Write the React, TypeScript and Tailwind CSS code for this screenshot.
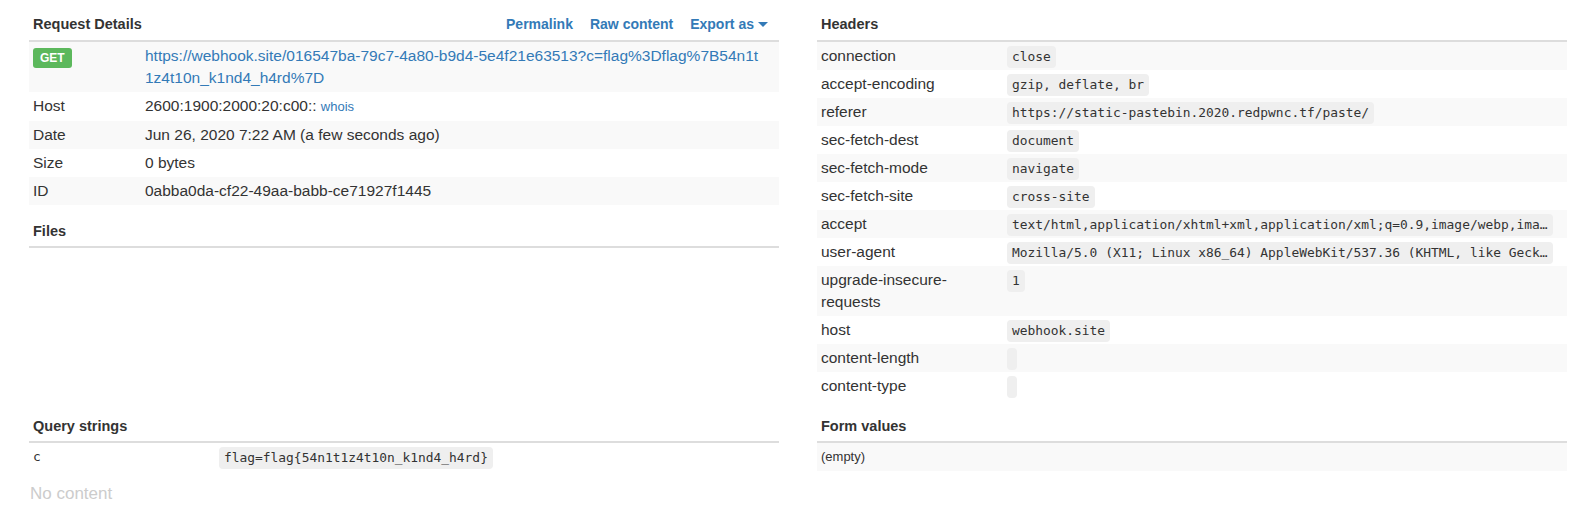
import React from 'react'

const HEADERS: [string, string][] = [
  ['connection', 'close'],
  ['accept-encoding', 'gzip, deflate, br'],
  ['referer', 'https://static-pastebin.2020.redpwnc.tf/paste/'],
  ['sec-fetch-dest', 'document'],
  ['sec-fetch-mode', 'navigate'],
  ['sec-fetch-site', 'cross-site'],
  ['accept', 'text/html,application/xhtml+xml,application/xml;q=0.9,image/webp,ima\u2026'],
  ['user-agent', 'Mozilla/5.0 (X11; Linux x86_64) AppleWebKit/537.36 (KHTML, like Geck\u2026'],
  ['upgrade-insecure-requests', '1'],
  ['host', 'webhook.site'],
  ['content-length', ''],
  ['content-type', ''],
]

function Code({ children }: { children?: React.ReactNode }) {
  return (
    <code className="block w-fit max-w-full h-[22px] whitespace-nowrap rounded-[4px] bg-[#efefef] px-[5px] py-[2px] font-['DejaVu_Sans_Mono','Liberation_Mono',monospace] text-[12.9px] leading-[18px] text-[#333]">
      {children}
    </code>
  )
}

function SectionHeader({ title, first, children }: { title: string; first?: boolean; children?: React.ReactNode }) {
  return (
    <div
      className={
        first
          ? 'flex items-end justify-between border-b-2 border-[#ddd] pl-1 pt-[14px] pb-[6px]'
          : 'flex items-end justify-between border-b-2 border-[#ddd] pl-1 mt-[16px] pb-[5px]'
      }
    >
      <h3 className="text-[14.5px] font-bold leading-[20px] text-[#333]">{title}</h3>
      {children}
    </div>
  )
}

function Row({ label, striped, children }: { label: React.ReactNode; striped: boolean; children: React.ReactNode }) {
  return (
    <div className={`flex ${striped ? 'bg-[#f9f9f9]' : 'bg-white'}`}>
      <div className="w-[112px] shrink-0 px-1 py-[3px] leading-[22px]">{label}</div>
      <div className="min-w-0 flex-1 pl-1 pr-1 py-[3px] leading-[22px]">{children}</div>
    </div>
  )
}

export default function App() {
  return (
    <div className="h-[507px] w-[1593px] overflow-hidden bg-white font-['Liberation_Sans',Arial,sans-serif] text-[15.5px] text-[#333]">
      <div className="flex gap-[38px] pl-[29px]">
        {/* request details + files */}
        <div className="w-[750px]">
          <SectionHeader title="Request Details" first>
            <div className="mr-[11px] flex items-center gap-[17px] text-[14px] font-bold leading-[20px] text-[#337ab7]">
              <a>Permalink</a>
              <a>Raw content</a>
              <a className="flex items-center">
                Export as
                <span className="ml-[4px] inline-block h-0 w-0 border-x-[5px] border-t-[5px] border-x-transparent border-t-[#337ab7]" />
              </a>
            </div>
          </SectionHeader>

          <div className="flex bg-[#f9f9f9]">
            <div className="w-[112px] shrink-0 px-1 pt-[6px]">
              <span className="block h-[20px] w-fit rounded-[3px] bg-[#5cb85c] px-[7px] text-[12px] font-bold leading-[20px] text-white">GET</span>
            </div>
            <div className="flex-1 px-1 py-[3px] leading-[22px] text-[#337ab7]">
              https://webhook.site/016547ba-79c7-4a80-b9d4-5e4f21e63513?c=flag%3Dflag%7B54n1t
              <br />
              1z4t10n_k1nd4_h4rd%7D
            </div>
          </div>
          <Row label="Host" striped={false}>
            2600:1900:2000:20:c00:: <a className="text-[13px] text-[#337ab7]">whois</a>
          </Row>
          <Row label="Date" striped>Jun 26, 2020 7:22 AM (a few seconds ago)</Row>
          <Row label="Size" striped={false}>0 bytes</Row>
          <Row label="ID" striped>0abba0da-cf22-49aa-babb-ce71927f1445</Row>

          <SectionHeader title="Files" />
        </div>

        {/* headers */}
        <div className="w-[750px]">
          <SectionHeader title="Headers" first />
          {HEADERS.map(([k, v], i) => (
            <div key={k} className={`flex ${i % 2 === 0 ? 'bg-[#f9f9f9]' : 'bg-white'}`}>
              <div className="w-[186px] shrink-0 px-1 py-[3px] leading-[22px]">{k}</div>
              <div className="min-w-0 flex-1 pl-1 pr-1 pt-[4px] pb-[2px]">
                <Code>{v}</Code>
              </div>
            </div>
          ))}
        </div>
      </div>

      <div className="flex gap-[38px] pl-[29px]">
        <div className="w-[750px]">
          <SectionHeader title="Query strings" />
          <div className="flex bg-white">
            <div className="w-[186px] shrink-0 px-1 py-[3px] font-['DejaVu_Sans_Mono','Liberation_Mono',monospace] text-[12.9px] leading-[22px]">c</div>
            <div className="min-w-0 flex-1 px-1 pt-[4px] pb-[2px]">
              <Code>flag=flag{'{'}54n1t1z4t10n_k1nd4_h4rd{'}'}</Code>
            </div>
          </div>
          <p className="mt-[12px] pl-[1px] text-[17px] leading-[22px] text-[#cccccc]">No content</p>
        </div>

        <div className="w-[750px]">
          <SectionHeader title="Form values" />
          <div className="bg-[#f9f9f9] px-1 py-[3px] text-[13px] leading-[22px]">(empty)</div>
        </div>
      </div>
    </div>
  )
}
